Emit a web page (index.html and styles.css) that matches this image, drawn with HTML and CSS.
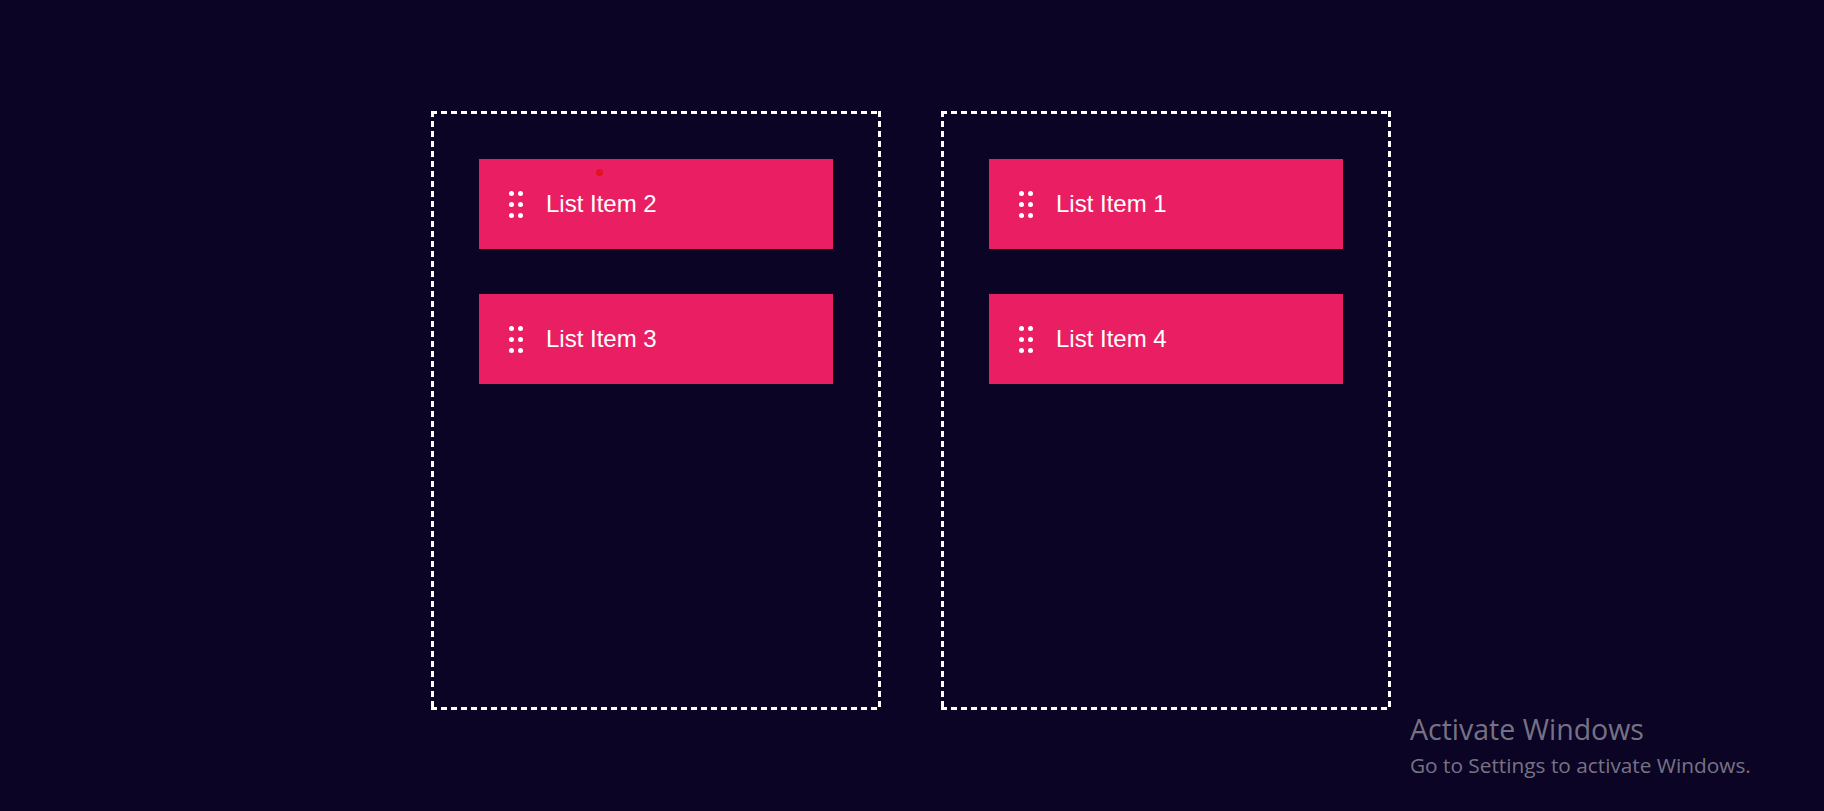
FILE: index.html
```html
<!DOCTYPE html>
<html>
<head>
<meta charset="utf-8">
<link rel="stylesheet" href="styles.css">
</head>
<body>
<main class="board">
  <section class="column">
    <div class="item">
      <span class="grip"><i></i><i></i><i></i><i></i><i></i><i></i></span>
      <span class="label">List Item 2</span>
      <span class="cursor-dot"></span>
    </div>
    <div class="item">
      <span class="grip"><i></i><i></i><i></i><i></i><i></i><i></i></span>
      <span class="label">List Item 3</span>
    </div>
  </section>
  <section class="column">
    <div class="item">
      <span class="grip"><i></i><i></i><i></i><i></i><i></i><i></i></span>
      <span class="label">List Item 1</span>
    </div>
    <div class="item">
      <span class="grip"><i></i><i></i><i></i><i></i><i></i><i></i></span>
      <span class="label">List Item 4</span>
    </div>
  </section>
</main>
<div class="watermark">
  <div class="wm-title">Activate Windows</div>
  <div class="wm-sub">Go to Settings to activate Windows.</div>
</div>
</body>
</html>
```
FILE: styles.css
```css
html, body {
  margin: 0;
  padding: 0;
}
body {
  background: #0b0425;
  width: 1824px;
  height: 811px;
  overflow: hidden;
  position: relative;
  font-family: "Liberation Sans", Arial, sans-serif;
}
.board {
  display: flex;
  justify-content: center;
  gap: 60px;
  padding-top: 111px;
  padding-right: 2px;
}
.column {
  box-sizing: border-box;
  width: 450px;
  height: 599px;
  padding: 48px;
  display: flex;
  flex-direction: column;
  gap: 45px;
  background:
    repeating-linear-gradient(90deg, #ffffff 0 6px, transparent 6px 10px) left top / 100% 3px no-repeat,
    repeating-linear-gradient(90deg, #ffffff 0 6px, transparent 6px 10px) left bottom / 100% 3px no-repeat,
    repeating-linear-gradient(180deg, #ffffff 0 6px, transparent 6px 10px) left top / 3px 100% no-repeat,
    repeating-linear-gradient(180deg, #ffffff 0 6px, transparent 6px 10px) right top / 3px 100% no-repeat;
}
.item {
  position: relative;
  height: 90px;
  flex: none;
  background: #e91e63;
  display: flex;
  align-items: center;
  padding-left: 30px;
  color: #ffffff;
}
.grip {
  display: grid;
  grid-template-columns: repeat(2, 5px);
  grid-auto-rows: 5px;
  column-gap: 4px;
  row-gap: 6px;
  width: 14px;
  margin-right: 23px;
}
.grip i {
  display: block;
  width: 5px;
  height: 5px;
  border-radius: 50%;
  background: #ffffff;
}
.label {
  font-size: 24px;
  line-height: 1;
}
.cursor-dot {
  position: absolute;
  left: 117px;
  top: 10px;
  width: 7px;
  height: 7px;
  border-radius: 50%;
  background: #e0141c;
}
.watermark {
  position: absolute;
  left: 1410px;
  top: 711px;
  color: rgba(255, 255, 255, 0.45);
  font-family: "Open Sans", "Noto Sans", sans-serif;
}
.wm-title {
  font-size: 28.5px;
  line-height: 36px;
}
.wm-sub {
  font-size: 20.8px;
  line-height: 28px;
  margin-top: 4px;
}
```
